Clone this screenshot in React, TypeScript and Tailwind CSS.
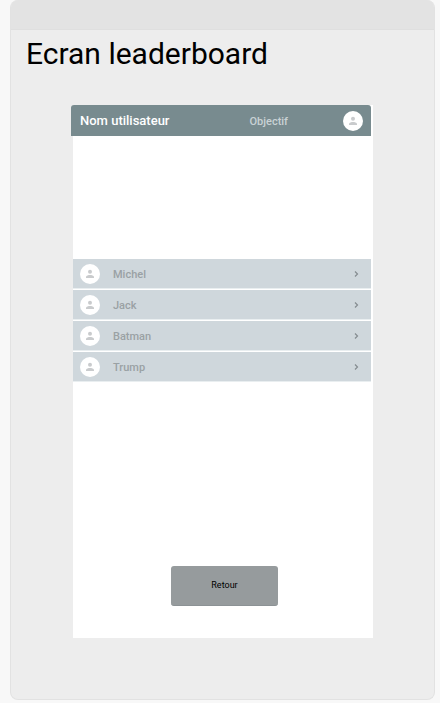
import React from "react";

const players = ["Michel", "Jack", "Batman", "Trump"];

function Avatar() {
  return (
    <span className="flex size-5 shrink-0 items-center justify-center rounded-full bg-white">
      <svg viewBox="0 0 24 24" className="size-3 fill-[#c9cbcd]" aria-hidden="true">
        <circle cx="12" cy="7.600" r="4" />
        <path d="M12 14c-2.800 0-8 1.300-8 4v2h16v-2c0-2.700-5.200-4-8-4z" />
      </svg>
    </span>
  );
}

function Chevron() {
  return (
    <svg viewBox="0 0 8 8" className="size-2 shrink-0" fill="none" stroke="#858c90" strokeWidth="1.200" aria-hidden="true">
      <path d="M3 1.500 5.500 4 3 6.500" />
    </svg>
  );
}

export default function App() {
  return (
    <div className="min-h-screen bg-[#f8f8f8] pr-[5px] pl-2.5 pb-[3px] font-['Roboto',sans-serif]">
      <main className="overflow-hidden rounded-lg border border-t-0 border-[#e2e2e2] bg-[#ededed] pb-[61px]">
        <div className="h-[30px] border-b border-[#dfdfdf] bg-[#e3e3e3]" />
        <h1 className="mt-1 pl-[15px] text-[30px] leading-10 text-black">Ecran leaderboard</h1>
        <section className="mt-[31px] mr-[61px] ml-[60px]">
          <div className="ml-[2px] bg-white">
            <header className="mr-[2px] -ml-[2px] flex h-[31px] items-center rounded-t-[3px] bg-[#788b8f] pr-2 pl-[9px]">
              <span className="flex-1 text-[13px] font-medium text-white">Nom utilisateur</span>
              <span className="mr-[55px] pt-[2px] text-[11px] leading-4 font-medium text-[#c9d2d5]">Objectif</span>
              <Avatar />
            </header>
            <ul className="mt-[123px] mr-[2px] flex flex-col gap-px">
              {players.map((name) => (
                <li key={name}>
                  <button
                    type="button"
                    className="flex h-[30px] w-full items-center border-b border-[#e9eef0] bg-[#cfd7dc] pr-[11px] pl-[7px] text-left"
                  >
                    <Avatar />
                    <span className="ml-[13px] flex-1 pt-[2px] text-[11px] leading-4 font-medium text-[#9aa1a4]">{name}</span>
                    <Chevron />
                  </button>
                </li>
              ))}
            </ul>
            <div className="flex justify-center pt-[184px] pb-8 pl-[3px]">
              <button
                type="button"
                className="h-10 w-[107px] rounded-[3px] border-b border-[#8c9295] bg-[#969b9d] text-[9px] text-black"
              >
                Retour
              </button>
            </div>
          </div>
        </section>
      </main>
    </div>
  );
}
